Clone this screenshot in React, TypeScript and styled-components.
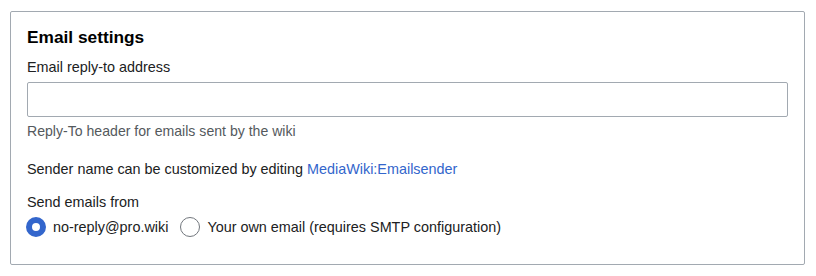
import styled, { createGlobalStyle } from 'styled-components';

const GlobalStyle = createGlobalStyle`
  body {
    margin: 0;
    background: #fff;
    font-family: 'Liberation Sans', Arial, sans-serif;
    color: #202122;
  }
`;

const Page = styled.div`
  padding: 11px 11px 0 10px;
`;

const Panel = styled.section`
  border: 1px solid #a2a9b1;
  border-radius: 2px;
  padding: 15px 16px 26px;
  height: 254px;
  box-sizing: border-box;
`;

const Title = styled.h3`
  margin: 0 0 10px;
  font-size: 17.3px;
  line-height: 20px;
  font-weight: bold;
  color: #000;
`;

const Field = styled.div<{ $gap?: number }>`
  margin-bottom: ${({ $gap }) => $gap ?? 0}px;
`;

const Label = styled.label`
  display: block;
  font-size: 14.4px;
  line-height: 20px;
  margin-bottom: 5px;
`;

const TextInput = styled.input`
  display: block;
  width: 100%;
  height: 35px;
  box-sizing: border-box;
  border: 1px solid #a2a9b1;
  border-radius: 2px;
  padding: 6px 8px;
  font: inherit;
  font-size: 14.4px;
  outline: none;
`;

const Help = styled.div`
  margin-top: 4px;
  font-size: 14.1px;
  line-height: 20px;
  color: #54595d;
`;

const Text = styled.p`
  margin: 0;
  font-size: 14.4px;
  line-height: 20px;
`;

const Link = styled.a`
  color: #36c;
  text-decoration: none;
`;

const RadioRow = styled.div`
  display: flex;
  align-items: center;
  gap: 13px;
  margin-top: 5px;
`;

const RadioOption = styled.label`
  display: flex;
  align-items: center;
  gap: 7px;
  font-size: 14.4px;
  line-height: 20px;
  cursor: pointer;
`;

const RadioCircle = styled.span<{ $checked?: boolean }>`
  width: 20px;
  height: 20px;
  box-sizing: border-box;
  border-radius: 50%;
  background: #fff;
  border: ${({ $checked }) => ($checked ? '6px solid #36c' : '1px solid #72777d')};
  margin-left: -1px;
`;

const App = () => {
  return (
    <Page>
      <GlobalStyle />
      <Panel>
        <Title>Email settings</Title>
        <Field $gap={18}>
          <Label>Email reply-to address</Label>
          <TextInput type="text" />
          <Help>Reply-To header for emails sent by the wiki</Help>
        </Field>
        <Field $gap={13}>
          <Text>
            Sender name can be customized by editing <Link href="#">MediaWiki:Emailsender</Link>
          </Text>
        </Field>
        <Field>
          <Text>Send emails from</Text>
          <RadioRow>
            <RadioOption>
              <RadioCircle $checked />
              no-reply@pro.wiki
            </RadioOption>
            <RadioOption>
              <RadioCircle />
              Your own email (requires SMTP configuration)
            </RadioOption>
          </RadioRow>
        </Field>
      </Panel>
    </Page>
  );
};

export default App;
